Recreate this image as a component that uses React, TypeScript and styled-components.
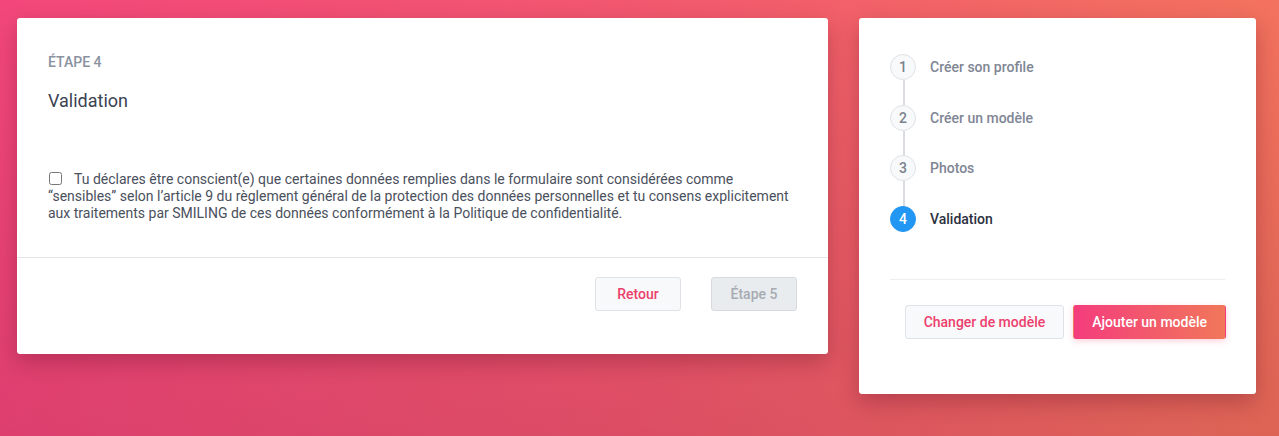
import React from 'react';
import styled, { createGlobalStyle } from 'styled-components';

const GlobalStyle = createGlobalStyle`
  html, body {
    margin: 0;
    padding: 0;
  }
  body {
    font-family: Roboto, "Liberation Sans", sans-serif;
    -webkit-font-smoothing: antialiased;
  }
`;

const Page = styled.div`
  width: 1279px;
  height: 436px;
  box-sizing: border-box;
  padding: 18px 23px 0 17px;
  display: flex;
  align-items: flex-start;
  gap: 31px;
  background:
    linear-gradient(to bottom, rgba(60, 0, 20, 0) 0%, rgba(60, 0, 20, 0.12) 100%),
    linear-gradient(to right, #f3477b 0%, #f2586f 50%, #f3725e 100%);
  overflow: hidden;
`;

const Card = styled.div<{ $width: number }>`
  width: ${(p) => p.$width}px;
  background: #fff;
  border-radius: 3px;
  box-shadow: 0 8px 22px rgba(80, 0, 30, 0.28);
  display: flex;
  flex-direction: column;
`;

const FormBody = styled.div`
  padding: 36px 31px 30px 31px;
  height: 239px;
  box-sizing: border-box;
  display: flex;
  flex-direction: column;
`;

const StepLabel = styled.div`
  font-size: 14px;
  font-weight: 500;
  color: #8a92a0;
  text-transform: uppercase;
  line-height: 16px;
`;

const Title = styled.h2`
  margin: 20px 0 0;
  font-size: 18px;
  font-weight: 400;
  color: #3b4252;
  line-height: 22px;
`;

const Consent = styled.label`
  margin-top: 59px;
  font-size: 14px;
  line-height: 17px;
  color: #4a505c;
`;

const Checkbox = styled.input`
  width: 13px;
  height: 13px;
  margin: 0 12px 0 1px;
  vertical-align: -1px;
`;

const Divider = styled.hr`
  margin: 0;
  border: 0;
  border-top: 1px solid #e3e5e8;
`;

const Footer = styled.div`
  display: flex;
  justify-content: flex-end;
  gap: 30px;
  padding: 19px 31px 43px;
`;

const Button = styled.button<{ $variant: 'light' | 'disabled' | 'primary' }>`
  height: 34px;
  box-sizing: border-box;
  border-radius: 3px;
  font-family: Roboto, "Liberation Sans", sans-serif;
  font-size: 14px;
  font-weight: 500;
  padding: 0 18px;
  cursor: pointer;
  border: 1px solid #dfe2e6;
  background: #f8f9fa;
  color: #ec3f6d;
  ${(p) =>
    p.$variant === 'disabled' &&
    `
    background: #e9ecef;
    color: #a6abb2;
    border-color: #d6d9dd;
    cursor: default;
  `}
  ${(p) =>
    p.$variant === 'primary' &&
    `
    background: linear-gradient(to right, #f43c7d, #f1775a);
    color: #fff;
    border-color: transparent;
    box-shadow: 0 2px 6px rgba(240, 70, 110, 0.25);
  `}
`;

const FooterButton = styled(Button)`
  width: 86px;
  padding: 0;
`;

const StepsBody = styled.div`
  padding: 36px 31px 0 31px;
`;

const StepList = styled.ol`
  list-style: none;
  margin: 0;
  padding: 0 0 47px;
`;

const StepItem = styled.li<{ $last?: boolean }>`
  position: relative;
  display: flex;
  align-items: center;
  gap: 14px;
  height: 26px;
  margin-bottom: ${(p) => (p.$last ? 0 : '24.5px')};

  &::after {
    content: '';
    display: ${(p) => (p.$last ? 'none' : 'block')};
    position: absolute;
    left: 13px;
    top: 26px;
    width: 2px;
    height: 25px;
    background: #d9dce0;
  }
`;

const StepCircle = styled.span<{ $active?: boolean }>`
  width: 26px;
  height: 26px;
  box-sizing: border-box;
  border-radius: 50%;
  display: flex;
  align-items: center;
  justify-content: center;
  font-size: 14px;
  font-weight: 500;
  border: 1px solid ${(p) => (p.$active ? '#2196f3' : '#dfe2e6')};
  background: ${(p) => (p.$active ? '#2196f3' : '#f8f9fa')};
  color: ${(p) => (p.$active ? '#fff' : '#7b828e')};
`;

const StepName = styled.span<{ $active?: boolean }>`
  font-size: 14px;
  font-weight: 500;
  color: ${(p) => (p.$active ? '#2b3040' : '#7f8694')};
`;

const SideDivider = styled.hr`
  margin: 0;
  border: 0;
  border-top: 1px solid #eceef0;
`;

const SideFooter = styled.div`
  display: flex;
  justify-content: flex-end;
  gap: 9px;
  padding: 25px 30px 55px 0;
`;

const steps = ['Créer son profile', 'Créer un modèle', 'Photos', 'Validation'];

export default function App() {
  return (
    <>
      <GlobalStyle />
      <Page>
        <Card $width={811}>
          <FormBody>
            <StepLabel>Étape 4</StepLabel>
            <Title>Validation</Title>
            <Consent>
              <Checkbox type="checkbox" />
              Tu déclares être conscient(e) que certaines données remplies dans le formulaire sont
              considérées comme “sensibles” selon l’article 9 du règlement général de la protection
              des données personnelles et tu consens explicitement aux traitements par SMILING de ces
              données conformément à la Politique de confidentialité.
            </Consent>
          </FormBody>
          <Divider />
          <Footer>
            <FooterButton $variant="light">Retour</FooterButton>
            <FooterButton $variant="disabled">Étape 5</FooterButton>
          </Footer>
        </Card>
        <Card $width={397}>
          <StepsBody>
            <StepList>
              {steps.map((s, i) => {
                const active = i === steps.length - 1;
                return (
                  <StepItem key={s} $last={active}>
                    <StepCircle $active={active}>{i + 1}</StepCircle>
                    <StepName $active={active}>{s}</StepName>
                  </StepItem>
                );
              })}
            </StepList>
            <SideDivider />
          </StepsBody>
          <SideFooter>
            <Button $variant="light">Changer de modèle</Button>
            <Button $variant="primary">Ajouter un modèle</Button>
          </SideFooter>
        </Card>
      </Page>
    </>
  );
}
